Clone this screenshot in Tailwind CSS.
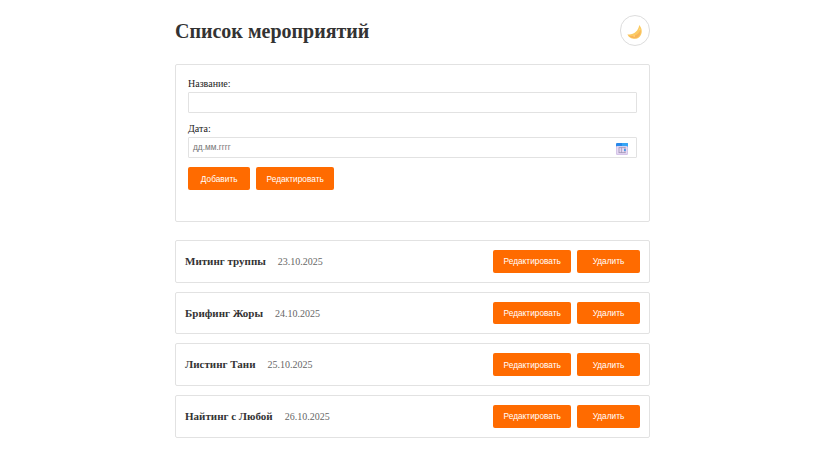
<!DOCTYPE html>
<html lang="ru">
<head>
<meta charset="utf-8">
<title>Список мероприятий</title>
<script src="https://cdn.jsdelivr.net/npm/@tailwindcss/browser@4"></script>
</head>
<body class="bg-white font-['Liberation_Serif',serif] text-[#333333]">
<main class="ml-[175px] w-[475px] pt-[15px]">
  <header class="flex h-[31px] items-center justify-between">
    <h1 class="whitespace-nowrap text-[20px] leading-[24px] font-bold">Список мероприятий</h1>
    <button class="flex size-[30.5px] items-center justify-center rounded-full border border-[#dddddd]" aria-label="Тема">
      <svg class="mt-[3px] size-[16px]" viewBox="0 0 16 16"><path d="M12.2 1C17 5.8 14.7 14.8 7.8 14.8C4.4 14.8 1.2 13 .5 10.2C5.8 11.3 11.6 7.3 12.2 1Z" fill="#fbca62"/><path d="M1.5 11.2C6 13.5 11.5 11 13.5 6C14.2 10.6 11.4 14.2 7.6 14.2C5 14.2 2.7 13.1 1.5 11.2Z" fill="#f8b458"/><circle cx="12.7" cy="5.3" r=".8" fill="#ffdc83"/><circle cx="7.2" cy="12" r=".9" fill="#ffd078"/></svg>
    </button>
  </header>
  <form class="mt-[18px] flex h-[158px] flex-col rounded-[2px] border border-[#e2e2e2] px-[12px] pt-[12px] text-[10px] leading-[14px] text-[#222222]">
    <label>Название:</label>
    <div class="mt-[1px] h-[21px] shrink-0 rounded-[1px] border border-[#e2e2e2]"></div>
    <label class="mt-[9px]">Дата:</label>
    <div class="mt-[1px] flex h-[21px] shrink-0 items-center justify-between rounded-[1px] border border-[#e2e2e2] pr-[8px] pl-[4px]">
      <span class="pb-[1px] font-['Liberation_Sans',sans-serif] text-[8.3px] leading-[10px] text-[#757575]">дд.мм.гггг</span>
      <svg class="mt-[3px] size-[12px]" viewBox="0 0 12 12"><rect width="12" height="12" rx="1.3" fill="#d5c4e8"/><path d="M0 3.2V1.3Q0 0 1.3 0H10.7Q12 0 12 1.3V3.2Z" fill="#2788ea"/><path d="M6 0H10.7Q12 0 12 1.3V3.2H6Z" fill="#36a5f5"/><path d="M1 3.2h10v7.6H1z" fill="#e6daf3"/><path d="M3 4.3v5.8M5.5 4.3v5.8M9 4.3v5.8" stroke="#b5a9c9" stroke-width="1.2"/><path d="M3 4.6h6.5M3 9.6h6.5" stroke="#9e94b5" stroke-width=".8"/><path d="M8 6h1.8v2H8z" fill="#459bea"/></svg>
    </div>
    <div class="mt-[9.4px] flex gap-[6px] font-['Liberation_Sans',sans-serif] text-[8.3px] leading-[10px] text-white">
      <button type="button" class="h-[22.5px] w-[62.4px] rounded-[2px] bg-[#ff6b00]">Добавить</button>
      <button type="button" class="h-[22.5px] w-[77.6px] rounded-[2px] bg-[#ff6b00]">Редактировать</button>
    </div>
  </form>
  <ul class="mt-[18px] flex flex-col gap-[9px]">
    <li class="flex h-[42.67px] items-center justify-between rounded-[2px] border border-[#e2e2e2] px-[9px]">
      <div class="flex items-baseline gap-[12px]"><strong class="text-[11px]">Митинг труппы</strong><span class="text-[10px] text-[#666666]">23.10.2025</span></div>
      <div class="flex gap-[6px] font-['Liberation_Sans',sans-serif] text-[8.3px] leading-[10px] text-white"><button class="h-[22.5px] w-[77.6px] rounded-[2px] bg-[#ff6b00]">Редактировать</button><button class="h-[22.5px] w-[63px] rounded-[2px] bg-[#ff6b00]">Удалить</button></div>
    </li>
    <li class="flex h-[42.67px] items-center justify-between rounded-[2px] border border-[#e2e2e2] px-[9px]">
      <div class="flex items-baseline gap-[12px]"><strong class="text-[11px]">Брифинг Жоры</strong><span class="text-[10px] text-[#666666]">24.10.2025</span></div>
      <div class="flex gap-[6px] font-['Liberation_Sans',sans-serif] text-[8.3px] leading-[10px] text-white"><button class="h-[22.5px] w-[77.6px] rounded-[2px] bg-[#ff6b00]">Редактировать</button><button class="h-[22.5px] w-[63px] rounded-[2px] bg-[#ff6b00]">Удалить</button></div>
    </li>
    <li class="flex h-[42.67px] items-center justify-between rounded-[2px] border border-[#e2e2e2] px-[9px]">
      <div class="flex items-baseline gap-[12px]"><strong class="text-[11px]">Листинг Тани</strong><span class="text-[10px] text-[#666666]">25.10.2025</span></div>
      <div class="flex gap-[6px] font-['Liberation_Sans',sans-serif] text-[8.3px] leading-[10px] text-white"><button class="h-[22.5px] w-[77.6px] rounded-[2px] bg-[#ff6b00]">Редактировать</button><button class="h-[22.5px] w-[63px] rounded-[2px] bg-[#ff6b00]">Удалить</button></div>
    </li>
    <li class="flex h-[42.67px] items-center justify-between rounded-[2px] border border-[#e2e2e2] px-[9px]">
      <div class="flex items-baseline gap-[12px]"><strong class="text-[11px]">Найтинг с Любой</strong><span class="text-[10px] text-[#666666]">26.10.2025</span></div>
      <div class="flex gap-[6px] font-['Liberation_Sans',sans-serif] text-[8.3px] leading-[10px] text-white"><button class="h-[22.5px] w-[77.6px] rounded-[2px] bg-[#ff6b00]">Редактировать</button><button class="h-[22.5px] w-[63px] rounded-[2px] bg-[#ff6b00]">Удалить</button></div>
    </li>
  </ul>
</main>
</body>
</html>
